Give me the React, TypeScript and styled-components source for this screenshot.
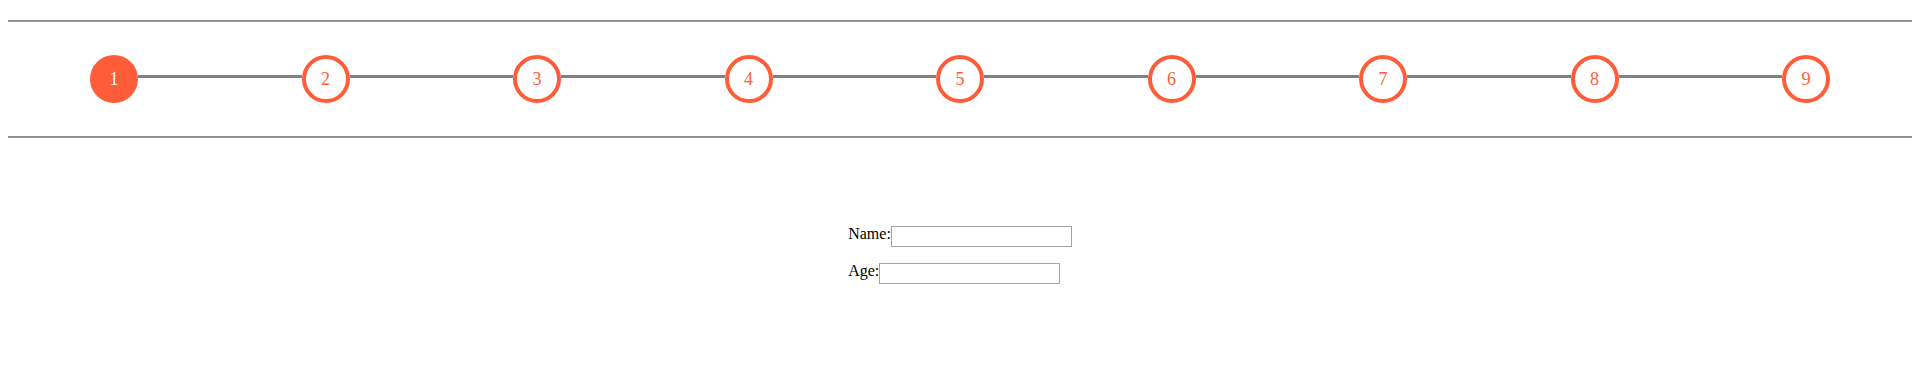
import styled, { createGlobalStyle } from "styled-components";

const steps = [1, 2, 3, 4, 5, 6, 7, 8, 9];
const current = 1;

const GlobalStyle = createGlobalStyle`
  body {
    margin: 0;
    background: #fff;
    font-family: "Liberation Serif", "Times New Roman", serif;
  }
`;

export default function App() {
  return (
    <Page>
      <GlobalStyle />
      <Rule />
      <Stepper>
        {steps.map((n, i) => (
          <StepGroup key={n} last={i === steps.length - 1}>
            <Circle active={n === current}>{n}</Circle>
            {i < steps.length - 1 && <Connector />}
          </StepGroup>
        ))}
      </Stepper>
      <Rule />
      <FormArea>
        <FormBody>
          <Row>
            <Label htmlFor="name">Name:</Label>
            <TextInput id="name" type="text" />
          </Row>
          <Row>
            <Label htmlFor="age">Age:</Label>
            <TextInput id="age" type="text" />
          </Row>
        </FormBody>
      </FormArea>
    </Page>
  );
}

const Page = styled.div`
  padding: 20px 8px 0;
`;

const Rule = styled.hr`
  margin: 0;
  height: 0;
  border: none;
  border-top: 1px solid #8a8a8a;
  border-bottom: 1px solid #9c9c9c;
`;

const Stepper = styled.div`
  display: flex;
  padding: 33px 82px;
`;

const StepGroup = styled.div<{ last: boolean }>`
  display: flex;
  align-items: flex-start;
  flex: ${(p) => (p.last ? "0 0 auto" : "1")};
`;

const Circle = styled.div<{ active: boolean }>`
  box-sizing: border-box;
  width: 48px;
  height: 48px;
  flex: 0 0 48px;
  border-radius: 50%;
  border: 4px solid #ff5c39;
  background: ${(p) => (p.active ? "#ff5c39" : "#fff")};
  color: ${(p) => (p.active ? "#fff" : "#ff5c39")};
  font-size: 18px;
  display: flex;
  align-items: center;
  justify-content: center;
`;

const Connector = styled.div`
  flex: 1;
  height: 3px;
  margin-top: 20px;
  background: #808080;
`;

const FormArea = styled.div`
  display: flex;
  justify-content: center;
  padding-top: 88px;
`;

const FormBody = styled.div`
  display: flex;
  flex-direction: column;
  align-items: flex-start;
  gap: 16px;
`;

const Row = styled.div`
  display: flex;
  align-items: flex-start;
`;

const Label = styled.label`
  font-size: 16px;
  line-height: 15px;
  color: #000;
`;

const TextInput = styled.input`
  box-sizing: border-box;
  width: 181px;
  height: 21px;
  margin: 0;
  padding: 1px 2px;
  border: 1px solid #a3a3a3;
  font: 13px "Liberation Sans", Arial, sans-serif;
  outline: none;
`;
